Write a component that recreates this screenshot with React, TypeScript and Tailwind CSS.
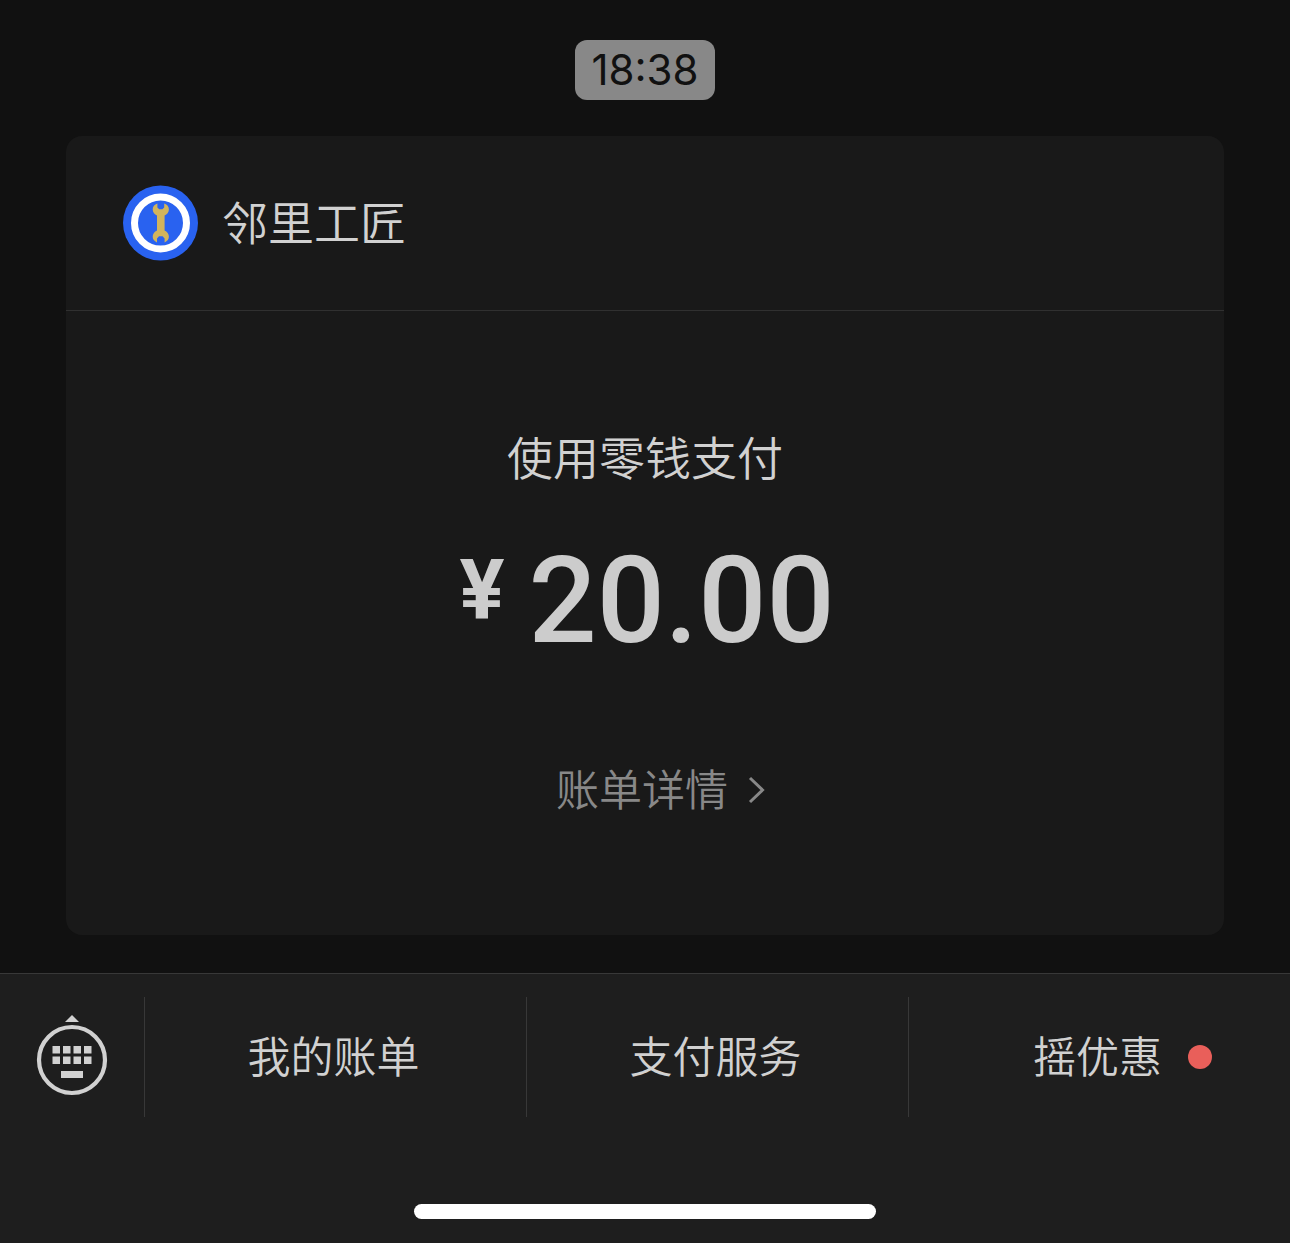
import React from 'react';

const menuItems = [
  { label: '我的账单', hasUpdate: false },
  { label: '支付服务', hasUpdate: false },
  { label: '摇优惠', hasUpdate: true }
];

function MerchantLogo() {
  return (
    <svg viewBox="0 0 76 76" className="h-[76px] w-[76px]" aria-hidden="true">
      <circle cx="38.5" cy="38" r="37.5" fill="#2962f0" />
      <circle cx="38.5" cy="38" r="26" fill="none" stroke="#ffffff" strokeWidth="7" />
      <path
        fill="#d2b45c"
        d="M35.4 18.6 C32.4 19.4 30.6 21.8 30.7 24.6 C30.8 27.4 32.6 29.6 35 30.6 V45.4 C32.5 46.6 30.7 48.8 30.7 51.6 C30.7 54.4 32.2 56.4 35 57.4 V53.4 L37 51.2 H40.6 L42.6 53.4 V57.4 C45.4 56.4 46.9 54.4 46.9 51.6 C46.9 48.8 45.1 46.6 42.6 45.4 V30.6 C45 29.6 46.8 27.4 46.9 24.6 C47 21.8 45.2 19.4 42.2 18.6 V22.4 L40.4 24.2 H37.2 L35.4 22.4 Z"
      />
    </svg>
  );
}

function KeyboardIcon() {
  const columns = [16, 26.5, 37, 47.5];

  return (
    <svg viewBox="0 0 72 82" className="h-[82px] w-[72px]" fill="#d1d1d1" aria-hidden="true">
      <path d="M36 0 L43 7 H29 Z" />
      <circle cx="36" cy="45" r="33" fill="none" stroke="#d1d1d1" strokeWidth="4.2" />
      {columns.map((x) => (
        <g key={x}>
          <rect x={x + 0.5} y="31" width="7.5" height="7.5" />
          <rect x={x + 0.5} y="41.5" width="7.5" height="7.5" />
        </g>
      ))}
      <rect x="25" y="56" width="22" height="7" />
    </svg>
  );
}

export default function App() {
  return (
    <div className="flex min-h-screen flex-col bg-[#111111] font-['Noto_Sans_CJK_SC',sans-serif] font-[350] text-[#d1d1d1]">
      <main className="px-[66px] pt-10 pb-[38px]">
        <div className="mb-9 flex justify-center">
          <time className="rounded-xl bg-[#888888] px-4 font-['Inter',sans-serif] text-[42px] leading-[60px] font-normal text-[#111111]">
            18:38
          </time>
        </div>

        {/* Payment card */}
        <section className="rounded-2xl bg-[#191919]">
          <header className="flex items-center gap-6 border-b border-[#303030] py-[49px] pl-14">
            <MerchantLogo />
            <h1 className="pb-1.5 text-[46px] leading-[68px]">邻里工匠</h1>
          </header>

          <div className="flex flex-col items-center pt-[110px] pb-[112px]">
            <p className="text-[46px] leading-[68px]">使用零钱支付</p>
            <p className="mt-[52px] flex items-start gap-6 pl-1 font-['Roboto',sans-serif] font-medium text-[#cccccc]">
              <span className="text-[84px] leading-[100px] font-bold">¥</span>
              <span className="text-[120px] leading-[120px]">20.00</span>
            </p>
            <a href="#bill" className="mt-24 ml-8 flex items-center gap-5 text-[43px] leading-[60px] text-[#888888]">
              <span className="pb-1.5">账单详情</span>
              <svg viewBox="0 0 18 28" className="h-7 w-[18px]" fill="none" stroke="currentColor" strokeWidth="3" aria-hidden="true">
                <path d="M2 2 L14.5 14 L2 26" />
              </svg>
            </a>
          </div>
        </section>
      </main>

      {/* Bottom menu */}
      <footer className="flex flex-1 flex-col justify-between border-t border-[#383838] bg-[#1e1e1e] pt-[23px] pb-6">
        <nav className="flex h-[120px]">
          <button type="button" aria-label="键盘" className="flex w-36 items-center justify-center pb-0.5">
            <KeyboardIcon />
          </button>
          {menuItems.map((item) => (
            <button key={item.label} type="button" className="flex flex-1 items-center justify-center border-l border-[#383838] pr-1 text-[43px]">
              <span className="relative pb-1.5">
                {item.label}
                {item.hasUpdate && (
                  <span className="absolute top-1/2 left-full ml-[26px] h-6 w-6 -translate-y-1/2 rounded-full bg-[#e95f5a]"></span>
                )}
              </span>
            </button>
          ))}
        </nav>
        <div className="mx-auto h-[15px] w-[462px] rounded-full bg-white"></div>
      </footer>
    </div>
  );
}
